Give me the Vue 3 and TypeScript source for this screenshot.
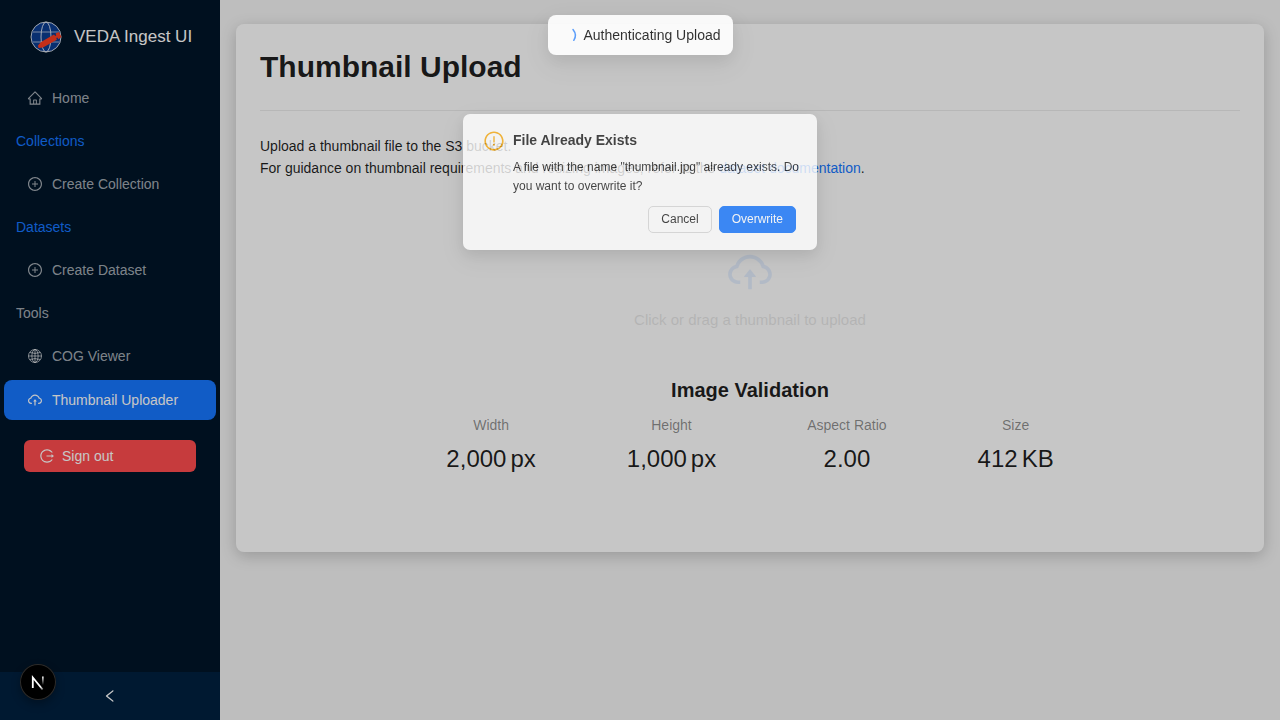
<script setup lang="ts">
interface Entry {
  kind: 'link' | 'group'
  label: string
  icon?: string
  accent?: boolean
  active?: boolean
}

interface Stat {
  title: string
  value: string
  suffix?: string
}

const ring =
  'M512 64C264.6 64 64 264.6 64 512s200.6 448 448 448 448-200.6 448-448S759.4 64 512 64zm0 820c-205.4 0-372-166.6-372-372s166.6-372 372-372 372 166.6 372 372-166.6 372-372 372z'

const icons: Record<string, string> = {
  home: 'M946.5 505L560.1 118.8l-25.9-25.9a31.5 31.5 0 00-44.4 0L77.5 505a63.9 63.9 0 00-18.8 46c.4 35.2 29.7 63.3 64.9 63.3h42.5V940h691.8V614.3h43.4c17.1 0 33.2-6.7 45.3-18.8a63.6 63.6 0 0018.7-45.3c0-17-6.7-33.1-18.8-45.2zM568 868H456V664h112v204zm217.9-325.7V868H632V640c0-22.1-17.9-40-40-40H432c-22.1 0-40 17.9-40 40v228H238.1V542.3h-96l370-369.7 23.1 23.1L882 542.3h-96.1z',
  plus: 'M696 480H544V328c0-4.4-3.6-8-8-8h-48c-4.4 0-8 3.6-8 8v152H328c-4.4 0-8 3.6-8 8v48c0 4.4 3.6 8 8 8h152v152c0 4.4 3.6 8 8 8h48c4.4 0 8-3.6 8-8V544h152c4.4 0 8-3.6 8-8v-48c0-4.4-3.6-8-8-8z' + ring,
  upload:
    'M518.3 459a8 8 0 00-12.6 0l-112 141.7a7.98 7.98 0 006.3 12.9h73.9V856c0 4.4 3.6 8 8 8h60c4.4 0 8-3.6 8-8V613.7H624c6.7 0 10.4-7.7 6.3-12.9L518.3 459zM811.4 366.7C765.6 245.9 648.9 160 512.2 160S258.8 245.8 213 366.6C127.3 389.1 64 467.2 64 560c0 110.5 89.5 200 199.9 200H304c4.4 0 8-3.6 8-8v-60c0-4.4-3.6-8-8-8h-40.1c-33.7 0-65.4-13.4-89-37.7-23.5-24.2-36-56.8-34.9-90.6.9-26.4 9.9-51.2 26.2-72.1 16.7-21.3 40.1-36.8 66.1-43.7l37.9-9.9 13.9-36.6c8.6-22.8 20.6-44.1 35.7-63.4a245.6 245.6 0 0152.4-49.9c41.1-28.9 89.5-44.2 140-44.2s98.9 15.3 140 44.2c19.9 14 37.5 30.8 52.4 49.9 15.1 19.3 27.1 40.7 35.7 63.4l13.8 36.5 37.8 10C846.1 454.5 884 503.8 884 560c0 33.1-12.9 64.3-36.3 87.7a123.07 123.07 0 01-87.6 36.3H720c-4.4 0-8 3.6-8 8v60c0 4.4 3.6 8 8 8h40.1C870.5 760 960 670.5 960 560c0-92.7-63.1-170.7-148.6-193.3z',
  logout:
    'M868 732h-70.3c-4.8 0-9.3 2.1-12.3 5.8-7 8.5-14.5 16.7-22.4 24.5a353.84 353.84 0 01-112.7 75.9A352.8 352.8 0 01512.4 866c-47.9 0-94.3-9.4-137.9-27.8a353.84 353.84 0 01-112.7-75.9 353.28 353.28 0 01-76-112.5C167.3 606.2 158 559.9 158 512s9.4-94.2 27.8-137.8c17.8-42.1 43.4-80 76-112.5s70.5-58.1 112.7-75.9c43.6-18.4 90-27.8 137.9-27.8 47.9 0 94.3 9.3 137.9 27.8 42.2 17.8 80.1 43.4 112.7 75.9 7.9 7.9 15.3 16.1 22.4 24.5 3 3.7 7.6 5.8 12.3 5.8H868c6.3 0 10.2-7 6.7-12.3C798 160.5 663.8 81.6 511.3 82 271.7 82.6 79.6 277.1 82 516.4 84.4 751.9 276.2 942 512.4 942c152.1 0 285.7-78.8 362.3-197.7 3.4-5.3-.4-12.3-6.7-12.3zm88.9-226.3L815 393.7c-5.3-4.2-13-.4-13 6.3v76H488c-4.4 0-8 3.6-8 8v56c0 4.4 3.6 8 8 8h314v76c0 6.7 7.8 10.5 13 6.3l141.9-112a8 8 0 000-12.6z',
  left: 'M724 218.3V141c0-6.7-7.7-10.4-12.9-6.3L260.3 486.8a31.86 31.86 0 000 50.3l450.8 352.1c5.3 4.1 12.9.4 12.9-6.3v-77.3c0-4.9-2.3-9.6-6.1-12.6l-360-281 360-281.1c3.8-3 6.1-7.7 6.1-12.6z',
  warning:
    ring +
    'M464 688a48 48 0 1096 0 48 48 0 10-96 0zm24-112h48c4.4 0 8-3.6 8-8V296c0-4.4-3.6-8-8-8h-48c-4.4 0-8 3.6-8 8v272c0 4.4 3.6 8 8 8z',
}

const entries: Entry[] = [
  { kind: 'link', label: 'Home', icon: 'home' },
  { kind: 'group', label: 'Collections', accent: true },
  { kind: 'link', label: 'Create Collection', icon: 'plus' },
  { kind: 'group', label: 'Datasets', accent: true },
  { kind: 'link', label: 'Create Dataset', icon: 'plus' },
  { kind: 'group', label: 'Tools' },
  { kind: 'link', label: 'COG Viewer', icon: 'globe' },
  { kind: 'link', label: 'Thumbnail Uploader', icon: 'upload', active: true },
]

const stats: Stat[] = [
  { title: 'Width', value: '2,000', suffix: 'px' },
  { title: 'Height', value: '1,000', suffix: 'px' },
  { title: 'Aspect Ratio', value: '2.00' },
  { title: 'Size', value: '412', suffix: 'KB' },
]
</script>

<template>
  <div class="layout">
    <aside class="sider">
      <div class="brand">
        <svg class="logo" viewBox="0 0 32 32" aria-hidden="true">
          <circle cx="16" cy="16" r="15" fill="#0b3d91" />
          <g fill="none" stroke="#fff" stroke-opacity=".8">
            <circle cx="16" cy="16" r="15" />
            <ellipse cx="16" cy="16" rx="5" ry="15" />
            <path d="M3 11h26M3 21h26" stroke-opacity=".6" />
          </g>
          <path
            d="M8 24.500 11 21l13-7.500 1.300 1.500 1-.7-.8-1.800 3.500-1.500 1.300 2.500 1.200 2.500-3 2.200-1.300-1.700-.9.6.6 1.700L13 26.500 8.500 27z"
            fill="#fc3d21"
          />
        </svg>
        <span>VEDA Ingest UI</span>
      </div>
      <nav class="menu">
        <template v-for="entry in entries" :key="entry.label">
          <div v-if="entry.kind === 'group'" class="group" :class="{ accent: entry.accent }">
            {{ entry.label }}
          </div>
          <a v-else href="#" class="item" :class="{ active: entry.active }">
            <svg v-if="entry.icon === 'globe'" class="icon" viewBox="0 0 1024 1024" aria-hidden="true">
              <g fill="none" stroke="currentColor" stroke-width="64">
                <circle cx="512" cy="512" r="416" />
                <ellipse cx="512" cy="512" rx="200" ry="416" />
                <path d="M512 96v832M96 512h832M180 290q332 110 664 0M180 734q332-110 664 0" />
              </g>
            </svg>
            <svg v-else class="icon" viewBox="0 0 1024 1024" aria-hidden="true">
              <path :d="icons[entry.icon ?? 'home']" fill="currentColor" />
            </svg>
            <span>{{ entry.label }}</span>
          </a>
        </template>
      </nav>
      <button type="button" class="signout">
        <svg class="icon" viewBox="0 0 1024 1024" aria-hidden="true">
          <path :d="icons.logout" fill="currentColor" />
        </svg>
        <span>Sign out</span>
      </button>
      <button type="button" class="collapse" aria-label="Collapse sidebar">
        <svg class="icon" viewBox="0 0 1024 1024" aria-hidden="true">
          <path :d="icons.left" fill="currentColor" />
        </svg>
      </button>
    </aside>

    <main class="content">
      <section class="card">
        <h1>Thumbnail Upload</h1>
        <hr />
        <p class="intro">
          Upload a thumbnail file to the S3 bucket.<br />
          For guidance on thumbnail requirements and resizing images, refer to the
          <a href="#">dataset documentation</a>.
        </p>
        <button type="button" class="dragger" disabled>
          <svg viewBox="0 0 1024 1024" aria-hidden="true">
            <path :d="icons.upload" fill="#1677ff" />
          </svg>
          <span>Click or drag a thumbnail to upload</span>
        </button>
        <h2>Image Validation</h2>
        <dl class="stats">
          <div v-for="stat in stats" :key="stat.title">
            <dt>{{ stat.title }}</dt>
            <dd>
              <span>{{ stat.value }}</span>
              <span v-if="stat.suffix">{{ stat.suffix }}</span>
            </dd>
          </div>
        </dl>
      </section>
    </main>
  </div>

  <div class="mask"></div>

  <div class="modal-wrap">
    <div class="modal" role="dialog" aria-labelledby="confirm-title">
      <div class="modal-body">
        <svg class="warning" viewBox="0 0 1024 1024" aria-hidden="true">
          <path :d="icons.warning" fill="#faad14" />
        </svg>
        <div>
          <h3 id="confirm-title">File Already Exists</h3>
          <p>A file with the name "thumbnail.jpg" already exists. Do you want to overwrite it?</p>
        </div>
      </div>
      <div class="modal-actions">
        <button type="button" class="btn">Cancel</button>
        <button type="button" class="btn primary">Overwrite</button>
      </div>
    </div>
  </div>

  <div class="message-wrap">
    <div class="message" role="status">
      <svg viewBox="0 0 16 16" aria-hidden="true">
        <path d="M13 2.500Q17.400 8 13.800 13.300" fill="none" stroke="#1677ff" stroke-opacity=".75" stroke-width="1.500" stroke-linecap="round" />
      </svg>
      <span>Authenticating Upload</span>
    </div>
  </div>

  <button type="button" class="devtools" aria-label="Open developer tools">
    <svg viewBox="0 0 36 36" aria-hidden="true">
      <defs>
        <linearGradient id="fade-diagonal" x1="18" y1="18" x2="24" y2="26" gradientUnits="userSpaceOnUse">
          <stop offset=".5" stop-color="#fff" />
          <stop offset="1" stop-color="#fff" stop-opacity=".3" />
        </linearGradient>
        <linearGradient id="fade-stem" x1="0" y1="12" x2="0" y2="21" gradientUnits="userSpaceOnUse">
          <stop offset="0" stop-color="#fff" />
          <stop offset="1" stop-color="#fff" stop-opacity="0" />
        </linearGradient>
      </defs>
      <path d="M12.800 24V13.500L22.600 25.500" fill="none" stroke="url(#fade-diagonal)" stroke-width="1.800" />
      <path d="M22 12.500h1.700v8.500H22z" fill="url(#fade-stem)" />
    </svg>
  </button>
</template>

<style>
body {
  margin: 0;
  background: #f5f5f5;
}
</style>

<style scoped>
* {
  box-sizing: border-box;
}
.layout,
.modal-wrap,
.message-wrap,
button {
  font-family: "Liberation Sans", Arial, sans-serif;
  font-size: 14px;
  line-height: 22px;
  color: rgba(0, 0, 0, 0.88);
}
button {
  cursor: pointer;
}
.layout {
  display: flex;
  min-height: 100vh;
  background: #f5f5f5;
}
.sider {
  flex: 0 0 220px;
  display: flex;
  flex-direction: column;
  background: #001529;
}
.brand {
  display: flex;
  align-items: center;
  gap: 12px;
  height: 74px;
  padding-left: 30px;
  color: #fff;
  font-size: 17px;
}
.logo {
  width: 32px;
  height: 32px;
}
.menu {
  display: flex;
  flex-direction: column;
  gap: 4px;
  padding: 4px;
}
.item {
  display: flex;
  align-items: center;
  gap: 9px;
  height: 40px;
  padding: 0 23px;
  border-radius: 8px;
  color: rgba(255, 255, 255, 0.65);
  text-decoration: none;
}
.item.active {
  background: #1677ff;
  color: #fff;
}
.icon {
  width: 16px;
  height: 16px;
  flex: none;
}
.group {
  padding: 8px 12px;
  color: rgba(255, 255, 255, 0.65);
}
.group.accent {
  color: #1677ff;
}
.signout {
  display: flex;
  align-items: center;
  gap: 7px;
  height: 32px;
  margin: 16px 24px;
  padding: 0 15px;
  border: 0;
  border-radius: 6px;
  background: #ff4d4f;
  color: #fff;
}
.collapse {
  display: flex;
  align-items: center;
  justify-content: center;
  height: 48px;
  margin-top: auto;
  border: 0;
  background: #002140;
  color: #fff;
}
.content {
  flex: 1;
  padding: 24px 16px;
}
.card {
  padding: 24px 24px 74px;
  border-radius: 8px;
  background: #fff;
  box-shadow: 0 4px 16px rgba(0, 0, 0, 0.2);
}
h1 {
  margin: 0;
  font-size: 30px;
  line-height: 38px;
}
hr {
  margin: 24px 0;
  border: 0;
  border-top: 1px solid #ececec;
}
.intro {
  margin: 0;
}
.intro a {
  color: #1677ff;
  text-decoration: none;
}
.dragger {
  display: flex;
  flex-direction: column;
  align-items: center;
  gap: 12px;
  width: 100%;
  padding: 68px 16px 45px;
  border: 0;
  background: none;
  font-size: 15px;
  opacity: 0.1;
}
.dragger svg {
  width: 50px;
  height: 50px;
}
h2 {
  margin: 0;
  font-size: 20px;
  line-height: 28px;
  text-align: center;
}
.stats {
  display: flex;
  flex-wrap: wrap;
  justify-content: center;
  gap: 16px 91px;
  margin: 10px 0 0;
  text-align: center;
}
dt {
  color: rgba(0, 0, 0, 0.45);
}
dd {
  display: flex;
  justify-content: center;
  gap: 4px;
  margin: 4px 0 0;
  font-size: 24px;
  line-height: 38px;
}
.mask {
  position: fixed;
  inset: 0;
  background: rgba(0, 0, 0, 0.224);
}
.modal-wrap {
  position: fixed;
  inset: 0;
  padding: 114px 16px 0;
}
.modal {
  max-width: 354px;
  margin: 0 auto;
  padding: 16px 18px 17px 20px;
  border-radius: 7px;
  background: #fff;
  box-shadow: 0 5px 14px rgba(0, 0, 0, 0.1), 0 8px 24px 7px rgba(0, 0, 0, 0.06);
  opacity: 0.79;
}
.modal-body {
  display: flex;
  gap: 8px;
}
.warning {
  flex: none;
  width: 22px;
  height: 22px;
}
h3 {
  margin: 0 0 8px;
  font-size: 14px;
  line-height: 20px;
}
.modal p {
  margin: 0;
  font-size: 12px;
  line-height: 19px;
}
.modal-actions {
  display: flex;
  justify-content: flex-end;
  gap: 7px;
  margin-top: 10px;
  padding-right: 3px;
}
.btn {
  height: 27px;
  padding: 0 12px;
  border: 1px solid #d9d9d9;
  border-radius: 5px;
  background: #fff;
  font-size: 12px;
  line-height: 19px;
}
.btn.primary {
  border-color: #1677ff;
  background: #1677ff;
  color: #fff;
}
.message-wrap {
  position: fixed;
  top: 15px;
  left: 0;
  right: 0;
  display: flex;
  justify-content: center;
}
.message {
  display: flex;
  align-items: center;
  gap: 8px;
  padding: 9px 12px;
  border-radius: 8px;
  background: #fff;
  box-shadow: 0 6px 16px rgba(0, 0, 0, 0.08), 0 9px 28px 8px rgba(0, 0, 0, 0.05);
  opacity: 0.9;
}
.message svg {
  width: 16px;
  height: 16px;
  overflow: visible;
}
.devtools {
  position: fixed;
  left: 20px;
  bottom: 20px;
  width: 36px;
  height: 36px;
  padding: 0;
  border: 0;
  border-radius: 50%;
  background: #000;
  box-shadow: inset 0 0 0 1px #2c2c2c, 0 4px 10px rgba(0, 0, 0, 0.3);
}
.devtools svg {
  display: block;
}
</style>
